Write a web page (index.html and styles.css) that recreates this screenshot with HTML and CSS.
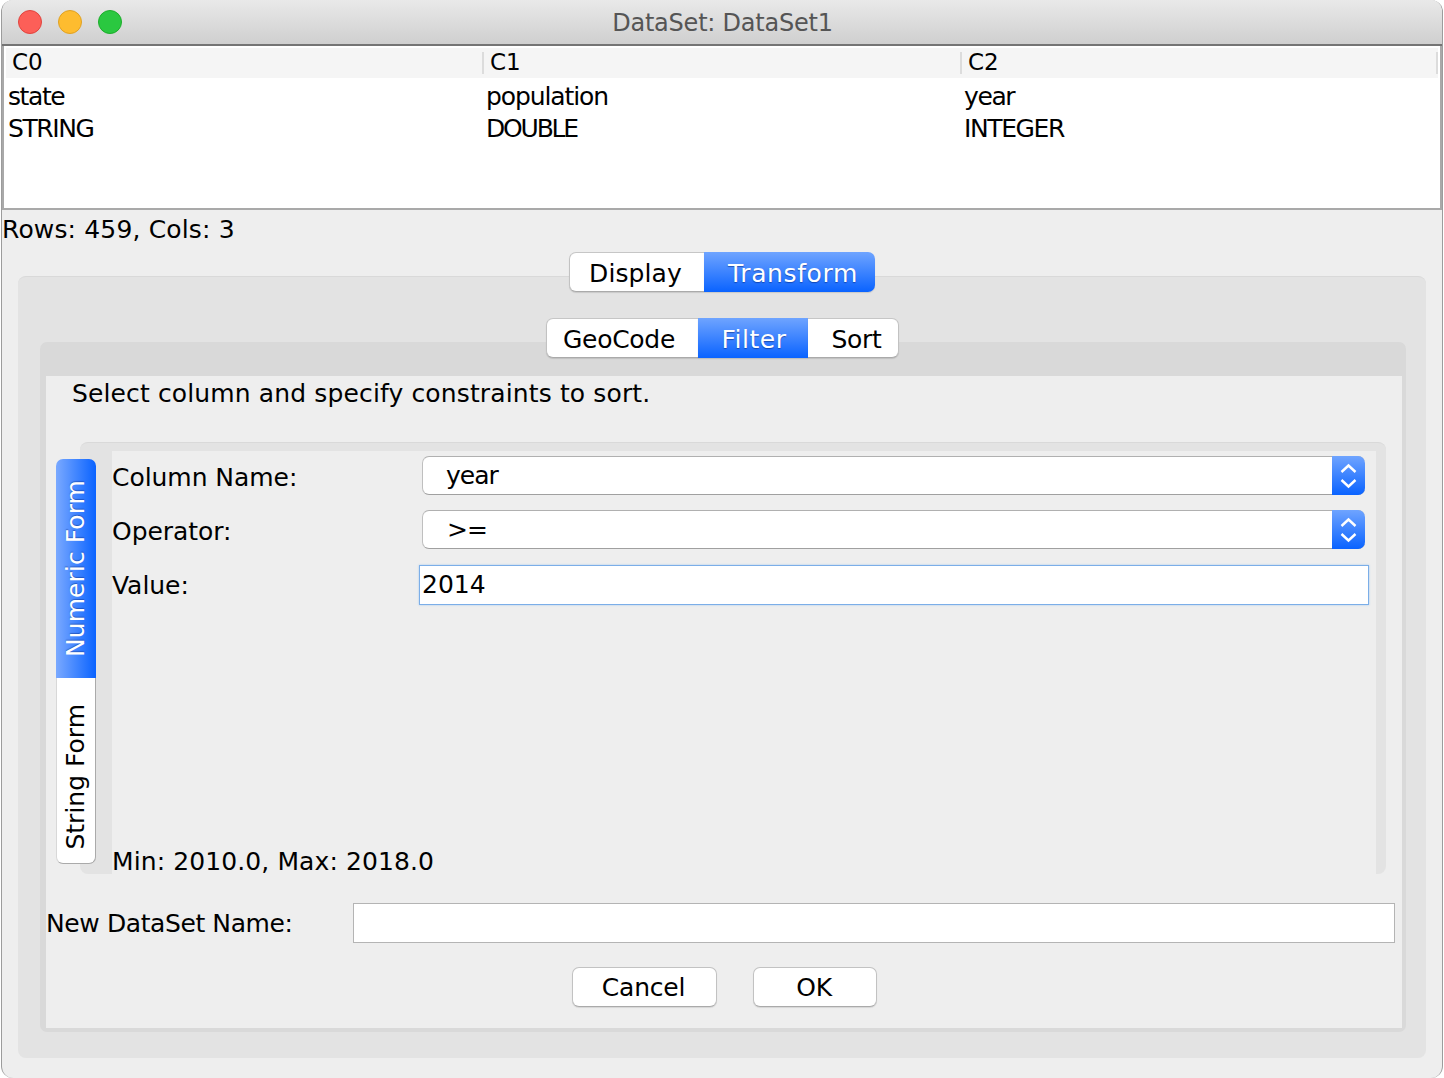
FILE: index.html
```html
<!DOCTYPE html>
<html lang="en">
<head>
<meta charset="utf-8">
<title>DataSet: DataSet1</title>
<link rel="stylesheet" href="styles.css">
</head>
<body>
<div class="window">
  <header class="titlebar">
    <div class="lights">
      <span class="light red"></span>
      <span class="light yellow"></span>
      <span class="light green"></span>
    </div>
    <span class="title">DataSet: DataSet1</span>
  </header>
  <section class="table">
    <div class="thead">
      <div class="th">C0</div>
      <div class="th">C1</div>
      <div class="th last">C2</div>
    </div>
    <div class="tr"><div class="td">state</div><div class="td wide">population</div><div class="td">year</div></div>
    <div class="tr"><div class="td">STRING</div><div class="td tighter">DOUBLE</div><div class="td">INTEGER</div></div>
  </section>
  <div class="status">Rows: 459, Cols: 3</div>
  <div class="tabs outer-tabs">
    <button class="seg seg-display">Display</button>
    <button class="seg seg-transform active">Transform</button>
  </div>
  <main class="outer-panel">
    <div class="tabs inner-tabs">
      <button class="seg seg-geo">GeoCode</button>
      <button class="seg seg-filter active">Filter</button>
      <button class="seg seg-sort">Sort</button>
    </div>
    <div class="inner-panel">
      <div class="content">
        <p class="hint">Select column and specify constraints to sort.</p>
        <div class="form-area">
          <div class="vtabs">
            <div class="vtab vtab-numeric active"><span>Numeric Form</span></div>
            <div class="vtab vtab-string"><span>String Form</span></div>
          </div>
          <div class="form-panel">
            <div class="form-body">
              <div class="row row-select">
                <label class="label">Column Name:</label>
                <div class="select">
                  <span class="select-text">year</span>
                  <span class="select-arrow">
                    <svg width="33" height="40" viewBox="0 0 33 40"><path d="M9.5 16 16.5 9.5 23.5 16M9.5 24 16.5 30.5 23.5 24" fill="none" stroke="#fff" stroke-width="2.4"/></svg>
                  </span>
                </div>
              </div>
              <div class="row row-select">
                <label class="label">Operator:</label>
                <div class="select">
                  <span class="select-text op">&gt;=</span>
                  <span class="select-arrow">
                    <svg width="33" height="40" viewBox="0 0 33 40"><path d="M9.5 16 16.5 9.5 23.5 16M9.5 24 16.5 30.5 23.5 24" fill="none" stroke="#fff" stroke-width="2.4"/></svg>
                  </span>
                </div>
              </div>
              <div class="row row-value">
                <label class="label label-value">Value:</label>
                <div class="value-input">2014</div>
              </div>
              <div class="minmax">Min: 2010.0, Max: 2018.0</div>
            </div>
          </div>
        </div>
        <div class="name-row">
          <label class="name-label">New DataSet Name:</label>
          <div class="name-input"></div>
        </div>
        <div class="buttons">
          <button class="btn btn-cancel">Cancel</button>
          <button class="btn btn-ok">OK</button>
        </div>
      </div>
    </div>
  </main>
</div>
</body>
</html>
```
FILE: styles.css
```css
* { box-sizing: border-box; }
html, body { margin: 0; padding: 0; background: #fff; }
body {
  width: 1444px;
  height: 1078px;
  overflow: hidden;
  font-family: "DejaVu Sans", sans-serif;
  font-size: 25px;
  color: #000;
}
.window {
  width: 1442px;
  height: 1078px;
  margin-left: 1px;
  background: #eee;
  border-left: 1px solid #9c9c9c;
  border-right: 1px solid #9c9c9c;
  border-radius: 12px;
  overflow: hidden;
}
.titlebar {
  height: 46px;
  background: linear-gradient(#e9e9e9, #cfcfcf);
  border-bottom: 2px solid #747474;
  display: flex;
  align-items: center;
  justify-content: center;
  position: relative;
}
.lights { position: absolute; left: 16px; top: 10px; display: flex; gap: 16px; }
.light { width: 24px; height: 24px; border-radius: 50%; border: 1px solid; }
.red { background: #fc5f58; border-color: #e0443e; }
.yellow { background: #febc2f; border-color: #dfa123; }
.green { background: #2ac840; border-color: #1dad2b; }
.title { color: #555; font-size: 24px; letter-spacing: -0.22px; margin-top: 2px; margin-left: 1px; }

.table {
  height: 164px;
  background: #fff;
  border: 2px solid #a9a9a9;
  border-top: 0;
  padding: 2px 0 0 2px;
}
.thead { display: flex; height: 30px; width: 1432px; margin-bottom: 2px; background: #f5f5f5; align-items: center; }
.th {
  width: 478px;
  height: 22px;
  padding-left: 6px;
  padding-bottom: 2px;
  display: flex;
  align-items: center;
  font-size: 23px;
  border-right: 2px solid #dcdcdc;
}
.th.last { width: 476px; }
.tr { display: flex; height: 32px; align-items: center; }
.td { width: 478px; padding-left: 2px; letter-spacing: -1.4px; }
.td.wide { letter-spacing: -1.1px; }
.td.tighter { letter-spacing: -2.2px; }

.status { height: 42px; padding-top: 3px; line-height: 34px; letter-spacing: 0.15px; }

.tabs { display: flex; justify-content: center; position: relative; z-index: 2; }
.outer-tabs { height: 40px; margin-left: 2px; padding-right: 2px; }
.seg {
  height: 40px;
  padding: 2px 0 0;
  margin: 0;
  font: inherit;
  color: #000;
  background: #fff;
  border: 0;
  border-bottom: 1px solid #aaa;
  border-top: 1px solid #c6c6c6;
  box-shadow: 0 1px 1px rgba(0, 0, 0, 0.12);
  letter-spacing: 0.1px;
}
.seg:first-child { border-radius: 7px 0 0 7px; border-left: 1px solid #c2c2c2; }
.seg:last-child { border-radius: 0 7px 7px 0; border-right: 1px solid #c2c2c2; }
.seg.active {
  color: #fff;
  background: linear-gradient(#6fa4ff, #0a63ff);
  border: 0;
  text-shadow: 0 1px 1px rgba(0, 30, 110, 0.5);
}
.seg-display { width: 135px; padding-right: 3px; }
.seg-transform { width: 171px; padding-left: 7px; letter-spacing: 0.6px; }
.seg-geo { width: 152px; padding-right: 6px; letter-spacing: -0.3px; }
.seg-filter { width: 110px; padding-left: 3px; letter-spacing: 0.5px; }
.seg-sort { width: 91px; padding-left: 8px; letter-spacing: -0.3px; }

.outer-panel {
  height: 782px;
  margin: -16px 16px 0;
  padding: 42px 20px 26px 22px;
  background: #e3e3e3;
  border-top: 1px solid #d9d9d9;
  border-radius: 8px;
}
.inner-tabs { height: 40px; margin-top: -1px; left: -1px; }
.inner-panel {
  height: 690px;
  margin-top: -16px;
  padding: 34px 4px 4px 6px;
  background: #d9d9d9;
  border-radius: 7px;
}
.content { height: 652px; background: #eee; }
.hint { margin: 0; height: 66px; padding-left: 26px; line-height: 36px; letter-spacing: 0.13px; }
.form-area { display: flex; height: 432px; padding-left: 10px; }
.vtabs { width: 40px; height: 405px; margin-top: 17px; position: relative; z-index: 1; flex: none; }
.vtab { width: 40px; display: flex; justify-content: center; align-items: center; }
.vtab span { writing-mode: vertical-rl; transform: rotate(180deg); letter-spacing: 0.07px; line-height: 40px; }
.vtab-numeric {
  height: 219px;
  color: #fff;
  background: linear-gradient(90deg, #7aa9ff, #0a63ff);
  border-radius: 7px 7px 0 0;
  text-shadow: 1px 0 1px rgba(0, 30, 110, 0.4);
}
.vtab-string {
  height: 186px;
  padding-top: 12px;
  background: #fff;
  border-radius: 0 0 7px 7px;
  border-right: 1px solid #aaa;
  border-bottom: 1px solid #aaa;
  border-left: 1px solid #d8d8d8;
}
.vtab-string span { letter-spacing: 0; }
.form-panel {
  width: 1306px;
  height: 432px;
  margin-left: -16px;
  padding: 8px 10px 0 32px;
  background: #e3e3e3;
  border-top: 1px solid #d9d9d9;
  border-radius: 8px;
  flex: none;
}
.form-body { height: 100%; background: #eee; display: flex; flex-direction: column; padding-top: 5px; }
.row { display: flex; align-items: center; }
.row-select { height: 39px; margin-bottom: 15px; }
.row-select + .row-value { margin-top: 1px; }
.label { width: 310px; letter-spacing: -0.05px; flex: none; }
.row-select .label { padding-top: 3px; }
.label-value { width: 307px; }
.select {
  width: 943px;
  height: 39px;
  background: #fff;
  border-top: 1px solid #b0b0b0;
  border-left: 1px solid #bfbfbf;
  border-bottom: 1px solid #a0a0a0;
  border-radius: 7px;
  display: flex;
  align-items: center;
  justify-content: space-between;
  padding-left: 23px;
  position: relative;
}
.select-text { letter-spacing: -1px; }
.select-text.op { padding-left: 1px; }
.select-arrow {
  width: 33px;
  height: 39px;
  margin: -1px 0;
  background: linear-gradient(#6fa4ff, #0a63ff);
  border-radius: 0 7px 7px 0;
  flex: none;
}
.select-arrow svg { display: block; }
.value-input {
  width: 950px;
  height: 40px;
  background: #fff;
  border: 1px solid #7baee8;
  box-shadow: 0 0 2px #a9cbf0;
  padding-left: 2px;
  line-height: 38px;
}
.minmax { margin-top: auto; height: 26px; line-height: 28px; letter-spacing: 0.1px; }

.name-row { display: flex; margin-top: 29px; height: 40px; align-items: center; }
.name-label { width: 307px; letter-spacing: -0.4px; flex: none; }
.name-input { width: 1042px; height: 40px; background: #fff; border: 1px solid #b4b4b4; }

.buttons { display: flex; justify-content: center; gap: 36px; margin-top: 24px; padding-left: 1px; }
.btn {
  height: 40px;
  padding: 0 2px 0 0;
  font: inherit;
  letter-spacing: -0.2px;
  color: #000;
  background: #fff;
  border: 1px solid #c2c2c2;
  border-bottom-color: #aaa;
  box-shadow: 0 1px 1px rgba(0, 0, 0, 0.1);
  border-radius: 7px;
}
.btn-cancel { width: 145px; }
.btn-ok { width: 124px; }
```
